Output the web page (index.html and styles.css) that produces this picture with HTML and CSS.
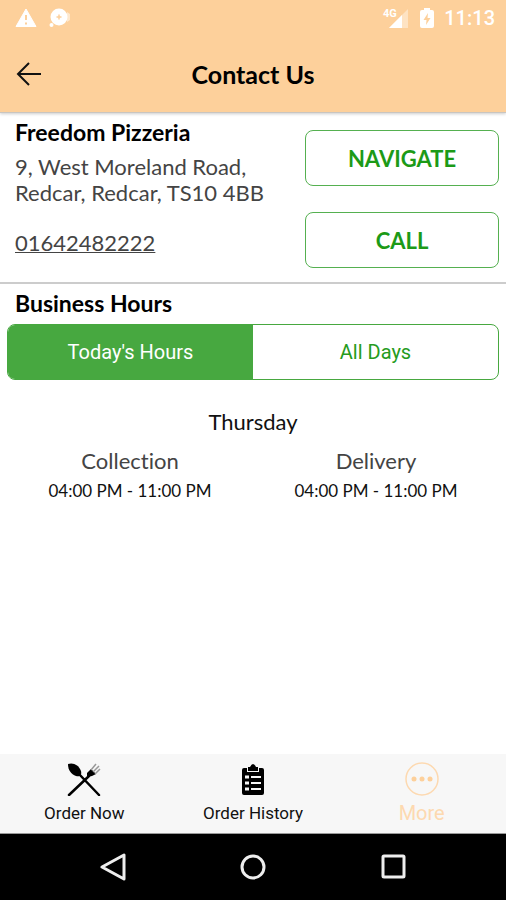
FILE: index.html
```
<!DOCTYPE html>
<html lang="en">
<head>
  <meta charset="UTF-8">
  <meta name="viewport" content="width=device-width, initial-scale=1">
  <title>Contact Us</title>
  <link rel="stylesheet" href="styles.css">
</head>
<body>

<header class="header">
  <div class="status-bar">
    <svg class="icon-warning" width="22" height="20" viewBox="0 0 22 20">
      <path d="M11 1 L21 18.500 H1 Z" fill="#fff" stroke="#fff" stroke-linejoin="round"/>
      <path d="M11 7 V12 M11 14.500 V16.500" stroke="#fdd09b" stroke-width="2"/>
    </svg>
    <svg width="22" height="20" viewBox="0 0 22 20">
      <circle cx="10" cy="9" r="8.500" fill="#fff"/>
      <circle cx="2.500" cy="17" r="2" fill="#fff"/>
      <path d="M18 4 L21 6 V12 L18 14 Z" fill="#fff" opacity=".5"/>
      <path d="M7.500 9 H12.500 M10 6.500 V11.500" stroke="#fdd09b" stroke-width="1.500"/>
    </svg>
    <div class="status-right">
      <svg width="28" height="22" viewBox="0 0 28 22">
        <text class="network" x="1" y="10">4G</text>
        <path d="M26 2 V21 H7 Z" fill="#fff" opacity=".4"/>
        <path d="M20 8 V21 H7 Z" fill="#fff"/>
      </svg>
      <svg width="14" height="20" viewBox="0 0 14 20">
        <path d="M4 0 H10 V2 H12 Q14 2 14 4 V18 Q14 20 12 20 H2 Q0 20 0 18 V4 Q0 2 2 2 H4 Z" fill="#fff"/>
        <path d="M8 5 L3.500 12 H6.500 L6 17 L10.500 10 H7.500 Z" fill="#fdd09b"/>
      </svg>
      <span class="time">11:13</span>
    </div>
  </div>
  <div class="title-bar">
    <button class="back" aria-label="Back">
      <svg width="26" height="24" viewBox="0 0 26 24" fill="none" stroke="#111" stroke-width="2">
        <path d="M25 12 H2 M13 1 L2 12 L13 23"/>
      </svg>
    </button>
    <h1>Contact Us</h1>
  </div>
</header>

<main>
  <section class="contact">
    <div class="info">
      <h2>Freedom Pizzeria</h2>
      <p class="address">9, West Moreland Road,<br>Redcar, Redcar, TS10 4BB</p>
      <a class="phone" href="tel:01642482222">01642482222</a>
    </div>
    <div class="actions">
      <button class="btn">NAVIGATE</button>
      <button class="btn">CALL</button>
    </div>
  </section>

  <section class="hours">
    <h2>Business Hours</h2>
    <div class="tabs">
      <button class="tab active">Today's Hours</button>
      <button class="tab">All Days</button>
    </div>
    <h3>Thursday</h3>
    <div class="times">
      <div class="slot">
        <p class="type">Collection</p>
        <p class="range">04:00 PM - 11:00 PM</p>
      </div>
      <div class="slot">
        <p class="type">Delivery</p>
        <p class="range">04:00 PM - 11:00 PM</p>
      </div>
    </div>
  </section>
</main>

<nav class="bottom-nav">
  <a href="#">
    <svg width="34" height="34" viewBox="0 0 34 34">
      <path d="M12 12 L32 33 M22 14 L2 33" stroke="#000" stroke-width="2.500" stroke-linecap="round"/>
      <path d="M1 2 C6 0 12 3 14 9 C15 13 13 15 9 14 C4 12 1 8 1 2 Z"/>
      <path d="M20 11 L24 7 L29 12 L25 14 L20 15 Z"/>
      <path d="M24 8 L29 2 M26 10 L32 4 M28 12 L33 7" stroke="#999" stroke-width="1.500"/>
    </svg>
    <span>Order Now</span>
  </a>
  <a href="#">
    <svg width="34" height="34" viewBox="0 0 34 34">
      <path d="M8 6 H11 V10 H23 V6 H26 Q28 6 28 8 V31 Q28 33 26 33 H8 Q6 33 6 31 V8 Q6 6 8 6 Z"/>
      <path d="M12 5 H14 Q17 -1 20 5 H22 V9 H12 Z"/>
      <path d="M9 15 H13 M9 21 H13 M9 27 H13" stroke="#f7f7f7" stroke-width="3"/>
      <path d="M15 15 H25 M15 21 H25 M15 27 H25" stroke="#f7f7f7" stroke-width="2"/>
    </svg>
    <span>Order History</span>
  </a>
  <a href="#" class="more">
    <svg width="34" height="34" viewBox="0 0 34 34">
      <circle cx="17" cy="17" r="16" fill="none" stroke="#fdd9b0" stroke-width="1.500"/>
      <g fill="#fdd09b"><circle cx="9" cy="17" r="2.500"/><circle cx="17" cy="17" r="2.500"/><circle cx="25" cy="17" r="2.500"/></g>
    </svg>
    <span>More</span>
  </a>
</nav>

<div class="system-nav">
  <button aria-label="System back">
    <svg width="28" height="28" viewBox="0 0 28 28"><path d="M25 2 V26 L3 14 Z"/></svg>
  </button>
  <button aria-label="Home">
    <svg width="28" height="28" viewBox="0 0 28 28"><circle cx="14" cy="14" r="11"/></svg>
  </button>
  <button aria-label="Recent apps">
    <svg width="28" height="28" viewBox="0 0 28 28"><rect x="4" y="3" width="21" height="21" rx="1"/></svg>
  </button>
</div>

</body>
</html>
```
FILE: styles.css
```
* { box-sizing: border-box; }
body { margin: 0; min-height: 100vh; display: flex; flex-direction: column; background: #fff; color: #111; font-family: Lato, sans-serif; font-variant-ligatures: none; }
h1, h2, h3, p { margin: 0; }
button { font: inherit; border: 0; padding: 0; background: none; cursor: pointer; }
svg { display: block; }

.header { background: #fdd09b; border-bottom: 1px solid #c9c5c0; box-shadow: 0 1px 3px #ccc; }
.status-bar { display: flex; align-items: center; gap: 12px; height: 36px; padding: 0 11px 0 15px; }
.status-right { display: flex; align-items: center; gap: 10px; margin-left: auto; }
.network { font: bold 11px Roboto, sans-serif; fill: #fff; }
.time { font: 500 20px Roboto, sans-serif; color: #fff; }
.title-bar { display: grid; grid-template-columns: 26px 1fr 26px; align-items: center; height: 76px; padding: 0 16px; }
.title-bar h1 { font-size: 25px; line-height: 28px; text-align: center; color: #000; }

main { flex: 1; }
h2 { font-size: 23px; line-height: 28px; color: #000; }
.contact { display: flex; justify-content: space-between; padding: 5px 7px 14px 15px; border-bottom: 2px solid #ccc; }
.address { margin-top: 8px; font-size: 22px; line-height: 26px; color: #444; }
.phone { display: inline-block; margin-top: 23px; font-size: 22px; line-height: 28px; color: #444; text-decoration-thickness: 1px; }
.actions { display: flex; flex-direction: column; gap: 26px; width: 194px; padding-top: 12px; }
.btn { height: 56px; border: 1px solid #55b050; border-radius: 8px; color: #1c9a17; font-size: 22px; font-weight: bold; }

.hours { padding: 5px 7px; }
.hours h2 { padding-left: 8px; }
.tabs { display: flex; margin-top: 7px; height: 56px; border: 1px solid #47a840; border-radius: 8px; overflow: hidden; }
.tab { flex: 1; font-family: Roboto, sans-serif; font-size: 20px; color: #259b20; }
.tab.active { background: #47a840; color: #fff; }
.hours h3 { margin-top: 28px; font-size: 22px; line-height: 28px; font-weight: normal; text-align: center; }
.times { display: flex; margin-top: 11px; text-align: center; }
.slot { flex: 1; }
.type { font-size: 22px; line-height: 28px; color: #444; }
.range { margin-top: 3px; font-size: 17px; line-height: 26px; }

.bottom-nav { display: flex; height: 80px; background: #f7f7f7; border-bottom: 1px solid #999; }
.bottom-nav a { flex: 1; display: flex; flex-direction: column; align-items: center; gap: 6px; padding-top: 8px; color: #111; font: 17px/22px Roboto, sans-serif; text-decoration: none; }
.bottom-nav .more { color: #fdd9b0; font-size: 20px; }

.system-nav { display: flex; justify-content: center; align-items: center; gap: 112px; height: 66px; background: #000; }
.system-nav svg { fill: none; stroke: #eee; stroke-width: 3; stroke-linejoin: round; }
```
